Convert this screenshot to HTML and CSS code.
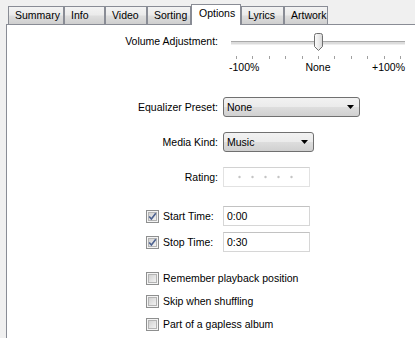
FILE: index.html
```html
<!DOCTYPE html>
<html>
<head>
<meta charset="utf-8">
<link rel="stylesheet" href="styles.css">
</head>
<body>
<div class="tabs">
  <div class="tab">Summary</div>
  <div class="tab">Info</div>
  <div class="tab">Video</div>
  <div class="tab">Sorting</div>
  <div class="tab tab-active">Options</div>
  <div class="tab">Lyrics</div>
  <div class="tab">Artwork</div>
</div>
<div class="panel">
  <div class="row row-volume">
    <div class="label label-top">Volume Adjustment:</div>
    <div class="slider">
      <svg class="slider-svg" width="180" height="28" viewBox="0 0 180 28">
        <defs>
          <linearGradient id="thumbGrad" x1="0" y1="0" x2="1" y2="0">
            <stop offset="0" stop-color="#fbfbfb"/>
            <stop offset="0.5" stop-color="#ececec"/>
            <stop offset="1" stop-color="#d6d6d6"/>
          </linearGradient>
        </defs>
        <rect x="2" y="9" width="174" height="1" fill="#a9a9a9"/>
        <rect x="2" y="10" width="174" height="2" fill="#dcdcdc"/>
        <rect x="2" y="12" width="174" height="1" fill="#eeeeee"/>
        <g fill="#a0a0a0">
          <rect x="7" y="24" width="1" height="3"/>
          <rect x="23" y="24" width="1" height="3"/>
          <rect x="40" y="24" width="1" height="3"/>
          <rect x="56" y="24" width="1" height="3"/>
          <rect x="73" y="24" width="1" height="3"/>
          <rect x="89" y="24" width="1" height="3"/>
          <rect x="105" y="24" width="1" height="3"/>
          <rect x="122" y="24" width="1" height="3"/>
          <rect x="138" y="24" width="1" height="3"/>
          <rect x="155" y="24" width="1" height="3"/>
          <rect x="171" y="24" width="1" height="3"/>
        </g>
        <path d="M85.5 3.5 Q85.5 1.5 87.5 1.5 H91.5 Q93.5 1.5 93.5 3.5 V14.5 L89.5 18.5 L85.5 14.5 Z" fill="url(#thumbGrad)" stroke="#6f6f6f" stroke-width="1"/>
      </svg>
      <div class="scale">
        <span class="scale-min">-100%</span>
        <span class="scale-mid">None</span>
        <span class="scale-max">+100%</span>
      </div>
    </div>
  </div>

  <div class="row row-eq">
    <div class="label">Equalizer Preset:</div>
    <div class="select select-wide"><span>None</span>
      <svg class="arrow" width="7" height="4" viewBox="0 0 7 4"><path d="M0 0H7L3.5 4Z" fill="#000"/></svg>
    </div>
  </div>

  <div class="row row-media">
    <div class="label">Media Kind:</div>
    <div class="select select-narrow"><span>Music</span>
      <svg class="arrow" width="7" height="4" viewBox="0 0 7 4"><path d="M0 0H7L3.5 4Z" fill="#000"/></svg>
    </div>
  </div>

  <div class="row row-rating">
    <div class="label">Rating:</div>
    <div class="rating">
      <svg width="60" height="4" viewBox="0 0 60 4">
        <g fill="#c4c4c4">
          <circle cx="1.5" cy="2" r="1.2"/>
          <circle cx="14.5" cy="2" r="1.2"/>
          <circle cx="27.5" cy="2" r="1.2"/>
          <circle cx="40.5" cy="2" r="1.2"/>
          <circle cx="53.5" cy="2" r="1.2"/>
        </g>
      </svg>
    </div>
  </div>

  <div class="row row-start">
    <div class="check">
      <span class="cb"><svg class="tick" width="13" height="13" viewBox="0 0 13 13"><path d="M3.2 6.4 L5.4 9 L9.8 3.2" fill="none" stroke="#4d6290" stroke-width="1.6"/></svg></span>
      <span>Start Time:</span>
    </div>
    <div class="field">0:00</div>
  </div>

  <div class="row row-stop">
    <div class="check">
      <span class="cb"><svg class="tick" width="13" height="13" viewBox="0 0 13 13"><path d="M3.2 6.4 L5.4 9 L9.8 3.2" fill="none" stroke="#4d6290" stroke-width="1.6"/></svg></span>
      <span>Stop Time:</span>
    </div>
    <div class="field">0:30</div>
  </div>

  <div class="options">
    <div class="check"><span class="cb"></span><span>Remember playback position</span></div>
    <div class="check"><span class="cb"></span><span>Skip when shuffling</span></div>
    <div class="check"><span class="cb"></span><span>Part of a gapless album</span></div>
  </div>
</div>
</body>
</html>
```
FILE: styles.css
```css
html, body {
  margin: 0;
  padding: 0;
  overflow: hidden;
}
body {
  background: #f0f0f0;
  font-family: "Liberation Sans", Arial, sans-serif;
  font-size: 10.5px;
  color: #000;
  width: 415px;
  height: 338px;
}

/* Tabs */
.tabs {
  display: grid;
  grid-template-columns: 56px 41px 42px 44px 50px 43px 44px;
  align-items: end;
  height: 25px;
  padding-left: 8px;
  box-sizing: border-box;
  margin-bottom: -1px;
  position: relative;
  z-index: 1;
}
.tab {
  height: 18px;
  margin-bottom: 1px;
  box-sizing: border-box;
  border: 1px solid #898c95;
  border-bottom: none;
  background: linear-gradient(#f3f3f3 0%, #ebebeb 45%, #dddddd 55%, #cfcfcf 100%);
  padding-left: 6px;
  line-height: 17px;
  white-space: nowrap;
}
.tab-active {
  height: 21px;
  margin-bottom: 0;
  background: #fff;
  line-height: 17px;
  padding-left: 7px;
}

/* Panel */
.panel {
  margin-left: 6px;
  height: 330px;
  background: #fff;
  border-left: 1px solid #898c95;
  border-top: 1px solid #898c95;
  padding-top: 7px;
  box-sizing: border-box;
}
.row {
  display: grid;
  grid-template-columns: 211px auto;
  column-gap: 5px;
  align-items: center;
}
.label {
  text-align: right;
  line-height: 14px;
  white-space: nowrap;
}
.row-volume {
  align-items: start;
}
.label-top {
  padding-top: 2px;
}
.slider {
  margin-left: 6px;
  width: 180px;
}
.slider-svg {
  display: block;
}
.scale {
  display: grid;
  grid-template-columns: 1fr auto 1fr;
  line-height: 14px;
  width: 178px;
}
.scale-max {
  text-align: right;
  padding-right: 2px;
}

.row-eq { margin-top: 23px; }
.row-media { margin-top: 15px; }
.row-rating { margin-top: 15px; }
.row-start { margin-top: 19px; }
.row-stop { margin-top: 6px; }

/* Combo boxes */
.select {
  height: 20px;
  box-sizing: border-box;
  border: 1px solid #707070;
  border-radius: 3px;
  background: linear-gradient(#f2f2f2 0%, #ebebeb 48%, #dddddd 52%, #d0d0d0 100%);
  display: flex;
  align-items: center;
  padding-left: 3px;
}
.select-wide { width: 137px; }
.select-narrow { width: 91px; }
.arrow {
  margin-left: auto;
  margin-right: 5px;
  display: block;
}

/* Rating */
.rating {
  width: 87px;
  height: 20px;
  box-sizing: border-box;
  border: 1px solid #e2e2e2;
  border-top-color: #d2d2d2;
  display: flex;
  align-items: center;
  padding-left: 14px;
}
.rating svg { display: block; }

/* Text fields */
.field {
  width: 87px;
  height: 20px;
  box-sizing: border-box;
  border: 1px solid #d6d6d6;
  border-top-color: #c2c2c2;
  padding-left: 3px;
  line-height: 18px;
}

/* Checkboxes */
.check {
  display: flex;
  align-items: center;
  gap: 4px;
  margin-left: 139px;
  line-height: 14px;
  white-space: nowrap;
}
.cb {
  position: relative;
  flex: none;
  width: 13px;
  height: 13px;
  box-sizing: border-box;
  border: 1px solid #8e8f8f;
  background: #f4f4f4;
}
.cb::before {
  content: "";
  position: absolute;
  left: 1px;
  top: 1px;
  right: 1px;
  bottom: 1px;
  border: 1px solid #b4b4b4;
  background: linear-gradient(135deg, #d2d2d2, #f2f2f2);
}
.tick {
  position: absolute;
  left: -1px;
  top: -1px;
  display: block;
}

.options {
  margin-top: 18px;
  display: flex;
  flex-direction: column;
  gap: 7px;
}
.options .check {
  height: 16px;
}
```
